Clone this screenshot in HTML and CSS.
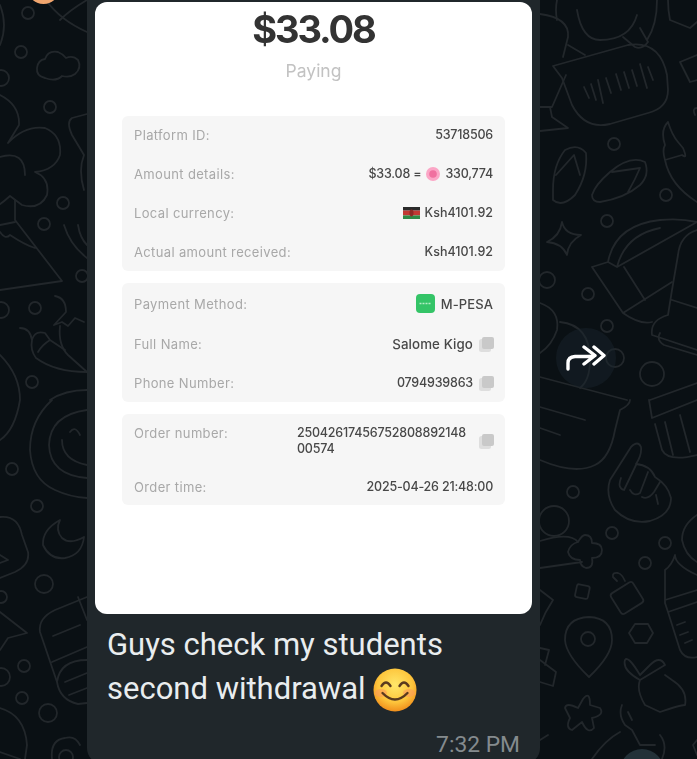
FILE: index.html
```html
<!DOCTYPE html>
<html lang="en">
<head>
  <meta charset="UTF-8" />
  <title>Forwarded chat message</title>
  <link rel="stylesheet" href="styles.css">
</head>
<body>

<svg class="wallpaper" width="697" height="759" viewBox="0 0 697 759" fill="none">
  <g class="dots">
    <circle cx="28" cy="13" r="6"/><circle cx="21" cy="52" r="6"/><circle cx="50" cy="107" r="6"/>
    <circle cx="63" cy="203" r="6"/><circle cx="44" cy="224" r="6"/><circle cx="35" cy="308" r="6"/>
    <circle cx="32" cy="382" r="6"/><circle cx="82" cy="276" r="6"/><circle cx="1" cy="78" r="8"/>
    <circle cx="1" cy="310" r="8"/><circle cx="12" cy="469" r="6"/><circle cx="37" cy="506" r="6"/>
    <circle cx="44" cy="584" r="9"/><circle cx="24" cy="666" r="6"/><circle cx="22" cy="698" r="6"/>
    <circle cx="48" cy="713" r="9"/><circle cx="1" cy="597" r="6"/><circle cx="1" cy="677" r="9"/>
    <circle cx="614" cy="144" r="6"/><circle cx="666" cy="195" r="6"/><circle cx="607" cy="221" r="6"/>
    <circle cx="547" cy="280" r="8"/><circle cx="588" cy="294" r="6"/><circle cx="607" cy="326" r="6"/>
    <circle cx="615" cy="358" r="9"/><circle cx="652" cy="374" r="12"/><circle cx="573" cy="492" r="6"/>
    <circle cx="554" cy="521" r="15"/><circle cx="612" cy="533" r="6"/><circle cx="665" cy="543" r="6"/>
    <circle cx="645" cy="563" r="6"/><circle cx="588" cy="639" r="7"/><circle cx="66" cy="757" r="7"/>
  </g>
  <g class="doodles">
    <!-- left side -->
    <path d="M46 0Q60 20 87 32M60 20Q70 10 87 0"/>
    <path d="M0 5Q8 25 0 45"/>
    <path d="M45 78Q36 76 37 68Q38 60 45 59Q48 50 58 52Q63 54 66 58Q73 55 78 60Q82 68 75 74Q70 78 62 76Q56 82 45 78Z"/>
    <path d="M87 114L72 118Q66 122 72 135L84 155Q78 170 84 190"/>
    <path d="M0 95Q20 105 19 125L8 143Q25 125 45 128Q62 135 60 155Q55 170 35 172Q50 178 47 195Q40 210 22 205L10 196Q0 205 -5 207"/>
    <path d="M0 157Q25 150 25 175M15 200V220L62 281L0 290M0 225L15 222M0 232Q5 240 10 235Q25 245 35 248"/>
    <path d="M64 225Q70 245 87 258M78 225Q80 238 87 245"/>
    <path d="M20 328Q30 328 32 340Q30 350 36 358Q55 372 87 372M32 340Q35 330 45 333L50 340Q42 345 38 352M50 340L65 350"/>
    <path d="M55 296Q66 298 66 312L54 325L62 322L68 326L75 318L84 322M60 326Q58 345 68 355L87 372"/>
    <path d="M0 355Q20 375 20 400Q15 430 0 440M50 400Q65 390 87 390"/>
    <path d="M52 400Q30 420 30 450Q32 480 55 490Q70 497 87 498M87 410Q50 415 49 445Q50 475 87 478M62 440Q62 460 87 465M70 432Q75 425 80 435"/>
    <path d="M60 520Q42 530 43 545Q50 560 65 558Q82 555 84 537Q70 545 62 538Q55 530 60 520Z"/>
    <path d="M0 517Q18 515 22 535L28 552Q30 565 15 572L0 578M0 555L8 560L0 563"/>
    <path d="M0 612L27 633L8 638L0 650"/>
    <path d="M87 597L55 610Q38 618 40 632L57 682Q60 700 78 704L87 703M53 636L80 625M52 662L87 647M65 682L87 673M69 695L87 688M78 597L87 620M57 682Q60 660 87 660"/>
    <path d="M0 708Q25 715 27 745L25 759M52 759Q50 740 65 738Q75 735 80 745M0 752L20 759"/>
    <!-- right side -->
    <path d="M557 0Q555 10 557 20M577 10Q582 40 600 40Q630 40 637 15M623 37L635 47Q642 50 648 42L640 28M657 0Q657 25 647 40"/>
    <path d="M553 66L628 45Q660 40 667 75L668 90Q668 108 648 113L610 124Q585 130 572 105L562 78Z"/>
    <path d="M584 87L589 98M591 84L596 100M598 80L603 103M606 78L611 93M616 74L621 90M624 72L629 88M632 70L637 86M640 64L647 88M648 67L653 80"/>
    <path d="M540 14Q570 18 568 37L563 57M566 75L552 107L540 107M550 107L552 117L568 128L540 131M568 45L585 55"/>
    <path d="M553 190Q553 165 565 150Q578 143 586 153Q588 175 575 195Q562 208 553 200ZM556 175L574 155L580 175"/>
    <path d="M592 195Q595 185 610 172Q630 155 645 162Q650 175 640 185Q625 198 600 202Q592 202 592 195ZM612 172L640 168Q635 180 628 192"/>
    <path d="M562 222Q565 235 581 235Q568 242 567 255Q562 243 547 242Q560 236 562 222Z"/>
    <path d="M592 267L608 262Q615 225 660 220Q680 218 697 222M617 267Q625 235 660 228M608 262L617 267L697 222M592 267L623 313L672 282M624 267L645 300M623 313Q640 325 652 322"/>
    <path d="M697 230Q680 235 678 255L672 290L668 315Q650 320 652 335L697 350M672 300L697 308M660 333Q656 340 664 345L697 355"/>
    <path d="M540 303Q560 310 557 330Q552 345 540 353M560 322Q590 325 590 360Q590 380 580 388"/>
    <path d="M540 377L627 400M650 400L697 383"/>
    <path d="M668 0Q668 10 670 20L690 28L697 22M680 62L697 55M680 62L690 82L697 80"/>
    <path d="M697 108Q692 108 695 115M668 122Q672 135 678 142L683 148Q688 160 682 155L665 160Q662 150 665 145Q660 130 668 122ZM665 160Q670 185 697 202"/>
    <path d="M649 400L652 418L697 400M655 424L662 450Q668 462 697 455M665 422L673 455M680 415L690 452"/>
    <path d="M540 407L585 420M540 428L560 435M540 460Q575 475 595 465Q610 458 615 430L620 410Q630 405 630 400"/>
    <path d="M631 447Q638 440 641 447Q642 455 636 464Q650 465 655 477Q668 485 671 498Q671 515 650 521Q630 525 615 510Q605 495 610 480ZM621 478Q617 488 624 490L636 465M630 490Q634 497 640 493L648 472M642 497Q648 500 654 492L660 482M656 495L658 504"/>
    <path d="M540 541Q570 532 578 542M540 568L582 562M578 542Q582 535 585 535Q592 535 592 543Q602 543 602 550Q602 558 592 558Q594 568 586 568Q580 566 580 560Q570 560 568 552Q570 544 578 542Z"/>
    <rect x="576" y="585" width="13" height="13" rx="2" transform="rotate(12 582 591)"/>
    <rect x="614" y="586" width="26" height="24" rx="3" transform="rotate(-32 627 598)"/>
    <path d="M617 581L613 577Q612 572 618 573Q622 574 625 581"/>
    <path d="M540 590L553 600Q545 612 540 625M540 648L549 650L545 665M540 660L556 672L553 686L540 682"/>
    <path d="M589 617Q565 618 565 640Q566 655 589 677Q612 655 612 640Q612 618 589 617Z"/>
    <path d="M635 624L648 624L653 633L647 643L635 643L629 633Z"/>
    <path d="M583 699Q590 690 590 705L600 708Q605 715 592 718L594 728Q588 735 582 722L572 730Q565 728 570 718L565 708Q566 702 578 708Z"/>
    <path d="M697 575Q675 565 675 555Q672 565 665 570Q665 580 665 603L668 612L680 650Q685 660 697 657M665 600L697 590M668 612L697 602M677 625L685 622M680 635L688 632M685 643L692 640"/>
    <path d="M697 515Q682 525 682 540Q685 555 697 562"/>
    <path d="M640 675Q628 655 625 660Q622 670 640 680L665 665Q660 655 650 665L640 675M640 680Q636 690 645 705L660 712Q680 705 685 705Q688 690 672 680L665 675M622 705Q618 715 625 725L632 730L640 745L655 745M632 720L628 712M592 759Q605 740 620 732M660 735Q668 745 662 759"/>
    <path d="M540 740L548 735M697 740L693 745L697 755"/>
  </g>
</svg>

<div class="avatar"></div>

<main class="bubble">
  <div class="shot">
    <div class="amount">$33.08</div>
    <div class="state">Paying</div>

    <section class="panel">
      <div class="row"><span class="label">Platform ID:</span><span class="value">53718506</span></div>
      <div class="row">
        <span class="label">Amount details:</span>
        <span class="value">$33.08 =
          <svg class="coin" width="14" height="14" viewBox="0 0 14 14"><circle cx="7" cy="7" r="7" fill="#fba6c6"/><circle cx="7" cy="7" r="3.800" fill="#f0709f"/></svg>
          330,774
        </span>
      </div>
      <div class="row">
        <span class="label">Local currency:</span>
        <span class="value value-ksh">
          <svg class="flag" width="17" height="12" viewBox="0 0 17 12"><rect width="17" height="3.600" y="0" fill="#2a2a2a"/><rect width="17" height="4.800" y="3.600" fill="#c23a34"/><rect width="17" height="3.600" y="8.400" fill="#2f8a47"/><ellipse cx="8.500" cy="6" rx="2" ry="3.400" fill="#8f2a26"/></svg>
          Ksh4101.92
        </span>
      </div>
      <div class="row"><span class="label">Actual amount received:</span><span class="value value-ksh">Ksh4101.92</span></div>
    </section>

    <section class="panel">
      <div class="row row-center">
        <span class="label">Payment Method:</span>
        <span class="value value-word value-pesa">
          <svg class="mpesa" width="19" height="19" viewBox="0 0 19 19"><rect width="19" height="19" rx="4" fill="#34c467"/><path d="M3.500 9.500H15.500" stroke="#b5ecc7" stroke-width="1.600" stroke-dasharray="2 1"/></svg>
          M-PESA
        </span>
      </div>
      <div class="row">
        <span class="label">Full Name:</span>
        <span class="value value-word">Salome Kigo
          <svg class="copy" width="15" height="15" viewBox="0 0 15 15"><rect x="0" y="2" width="12" height="13" rx="2.500" fill="#dedede"/><rect x="3" y="0" width="12" height="12" rx="2" fill="#c9c9c9"/></svg>
        </span>
      </div>
      <div class="row">
        <span class="label">Phone Number:</span>
        <span class="value">0794939863
          <svg class="copy" width="15" height="15" viewBox="0 0 15 15"><rect x="0" y="2" width="12" height="13" rx="2.500" fill="#dedede"/><rect x="3" y="0" width="12" height="12" rx="2" fill="#c9c9c9"/></svg>
        </span>
      </div>
    </section>

    <section class="panel panel-order">
      <div class="row">
        <span class="label">Order number:</span>
        <span class="value value-long"><span>25042617456752808892148<br>00574</span>
          <svg class="copy" width="15" height="15" viewBox="0 0 15 15"><rect x="0" y="2" width="12" height="13" rx="2.500" fill="#dedede"/><rect x="3" y="0" width="12" height="12" rx="2" fill="#c9c9c9"/></svg>
        </span>
      </div>
      <div class="row"><span class="label">Order time:</span><span class="value">2025-04-26 21:48:00</span></div>
    </section>
  </div>

  <p class="message">Guys check my students<br>second withdrawal
    <svg class="emoji" width="44" height="44" viewBox="0 0 44 44">
      <defs>
        <radialGradient id="face" cx="50%" cy="38%" r="62%">
          <stop offset="0" stop-color="#ffe76a"/>
          <stop offset="0.65" stop-color="#fdc53c"/>
          <stop offset="1" stop-color="#f08f1c"/>
        </radialGradient>
      </defs>
      <circle cx="22" cy="22" r="21.500" fill="url(#face)"/>
      <ellipse cx="8" cy="25" rx="6" ry="4" fill="#fb9a5a" opacity="0.6"/>
      <ellipse cx="36" cy="25" rx="6" ry="4" fill="#fb9a5a" opacity="0.6"/>
      <path d="M8.500 18Q13 11 17.500 18M26.500 18Q31 11 35.500 18" stroke="#5a3a1e" stroke-width="2.400" fill="none" stroke-linecap="round"/>
      <path d="M9.500 25Q22 38 34.500 25" stroke="#5a3a1e" stroke-width="2.400" fill="none" stroke-linecap="round"/>
    </svg>
  </p>
  <div class="time">7:32 PM</div>
</main>

<div class="forward">
  <svg width="40" height="28" viewBox="0 0 40 28" fill="none"><path d="M2 25V19Q2 13 9 12.500H27M18 3L29 11.500L18 20M28 3L38 11.500L28 20" stroke="#fff" stroke-width="3.400" stroke-linecap="round" stroke-linejoin="round"/></svg>
</div>
<div class="scroll-btn"></div>

</body>
</html>
```

FILE: styles.css
```css
* {
  box-sizing: border-box;
  margin: 0;
  padding: 0;
}

html, body {
  height: 759px;
  overflow: hidden;
}

body {
  position: relative;
  background: #0a1014;
  font-family: Roboto, sans-serif;
}

.wallpaper {
  position: absolute;
  left: 0;
  top: 0;
}

.doodles path, .doodles rect, .dots circle {
  stroke: #22272b;
  stroke-width: 1.8;
  stroke-linecap: round;
  stroke-linejoin: round;
}

.avatar {
  position: absolute;
  left: 27px;
  top: -29px;
  width: 33px;
  height: 33px;
  border-radius: 50%;
  background: #f0a56e;
}

.bubble {
  position: relative;
  width: 453px;
  height: 764px;
  margin-left: 87px;
  padding: 2px 8px 0;
  background: #20272b;
  border-radius: 0 0 16px 16px;
}

.shot {
  height: 612px;
  padding: 0 27px;
  background: #fff;
  border-radius: 12px;
  font-family: Inter, sans-serif;
  filter: blur(0.5px);
}

.amount {
  padding-top: 5px;
  height: 49px;
  font-size: 38px;
  line-height: 44px;
  font-weight: 700;
  letter-spacing: -2.1px;
  text-align: center;
  color: #333;
}

.state {
  height: 65px;
  padding-top: 9px;
  font-size: 17.500px;
  line-height: 22px;
  text-align: center;
  color: #c2c2c2;
}

.panel {
  display: flex;
  flex-direction: column;
  gap: 23px;
  margin-bottom: 12px;
  padding: 11px 12px;
  background: #f6f6f6;
  border-radius: 6px;
}

.panel-order {
  gap: 22px;
  margin-bottom: 0;
  padding-bottom: 10px;
}

.row {
  display: flex;
  justify-content: space-between;
  align-items: flex-start;
  font-size: 13px;
  line-height: 16px;
}

.row-center {
  align-items: center;
}

.label {
  color: #a8a8a8;
  letter-spacing: 0.35px;
}

.value {
  display: flex;
  align-items: center;
  gap: 5px;
  font-size: 12.500px;
  font-weight: 500;
  letter-spacing: -0.2px;
  color: #484848;
}

.value-ksh {
  letter-spacing: 0;
}

.value-word {
  gap: 6px;
  font-size: 13.300px;
  letter-spacing: 0.1px;
}

.value-pesa {
  font-size: 13px;
}

.value-long {
  gap: 12px;
}

.copy {
  margin-left: 1px;
  margin-right: -1px;
}

.value-word .copy {
  margin-left: 0;
}

.message {
  padding: 9px 12px 0;
  font-size: 31px;
  line-height: 44px;
  color: #e9edef;
}

.emoji {
  vertical-align: -13px;
}

.time {
  margin-top: 19px;
  padding-right: 12px;
  font-size: 22.800px;
  line-height: 28px;
  text-align: right;
  color: #858b8e;
}

.forward {
  position: absolute;
  left: 556px;
  top: 328px;
  width: 60px;
  height: 60px;
  display: flex;
  align-items: center;
  justify-content: center;
  background: rgba(27, 38, 46, 0.45);
  border-radius: 50%;
}

.scroll-btn {
  position: absolute;
  left: 620px;
  top: 749px;
  width: 44px;
  height: 44px;
  background: #233138;
  border-radius: 50%;
}
```
